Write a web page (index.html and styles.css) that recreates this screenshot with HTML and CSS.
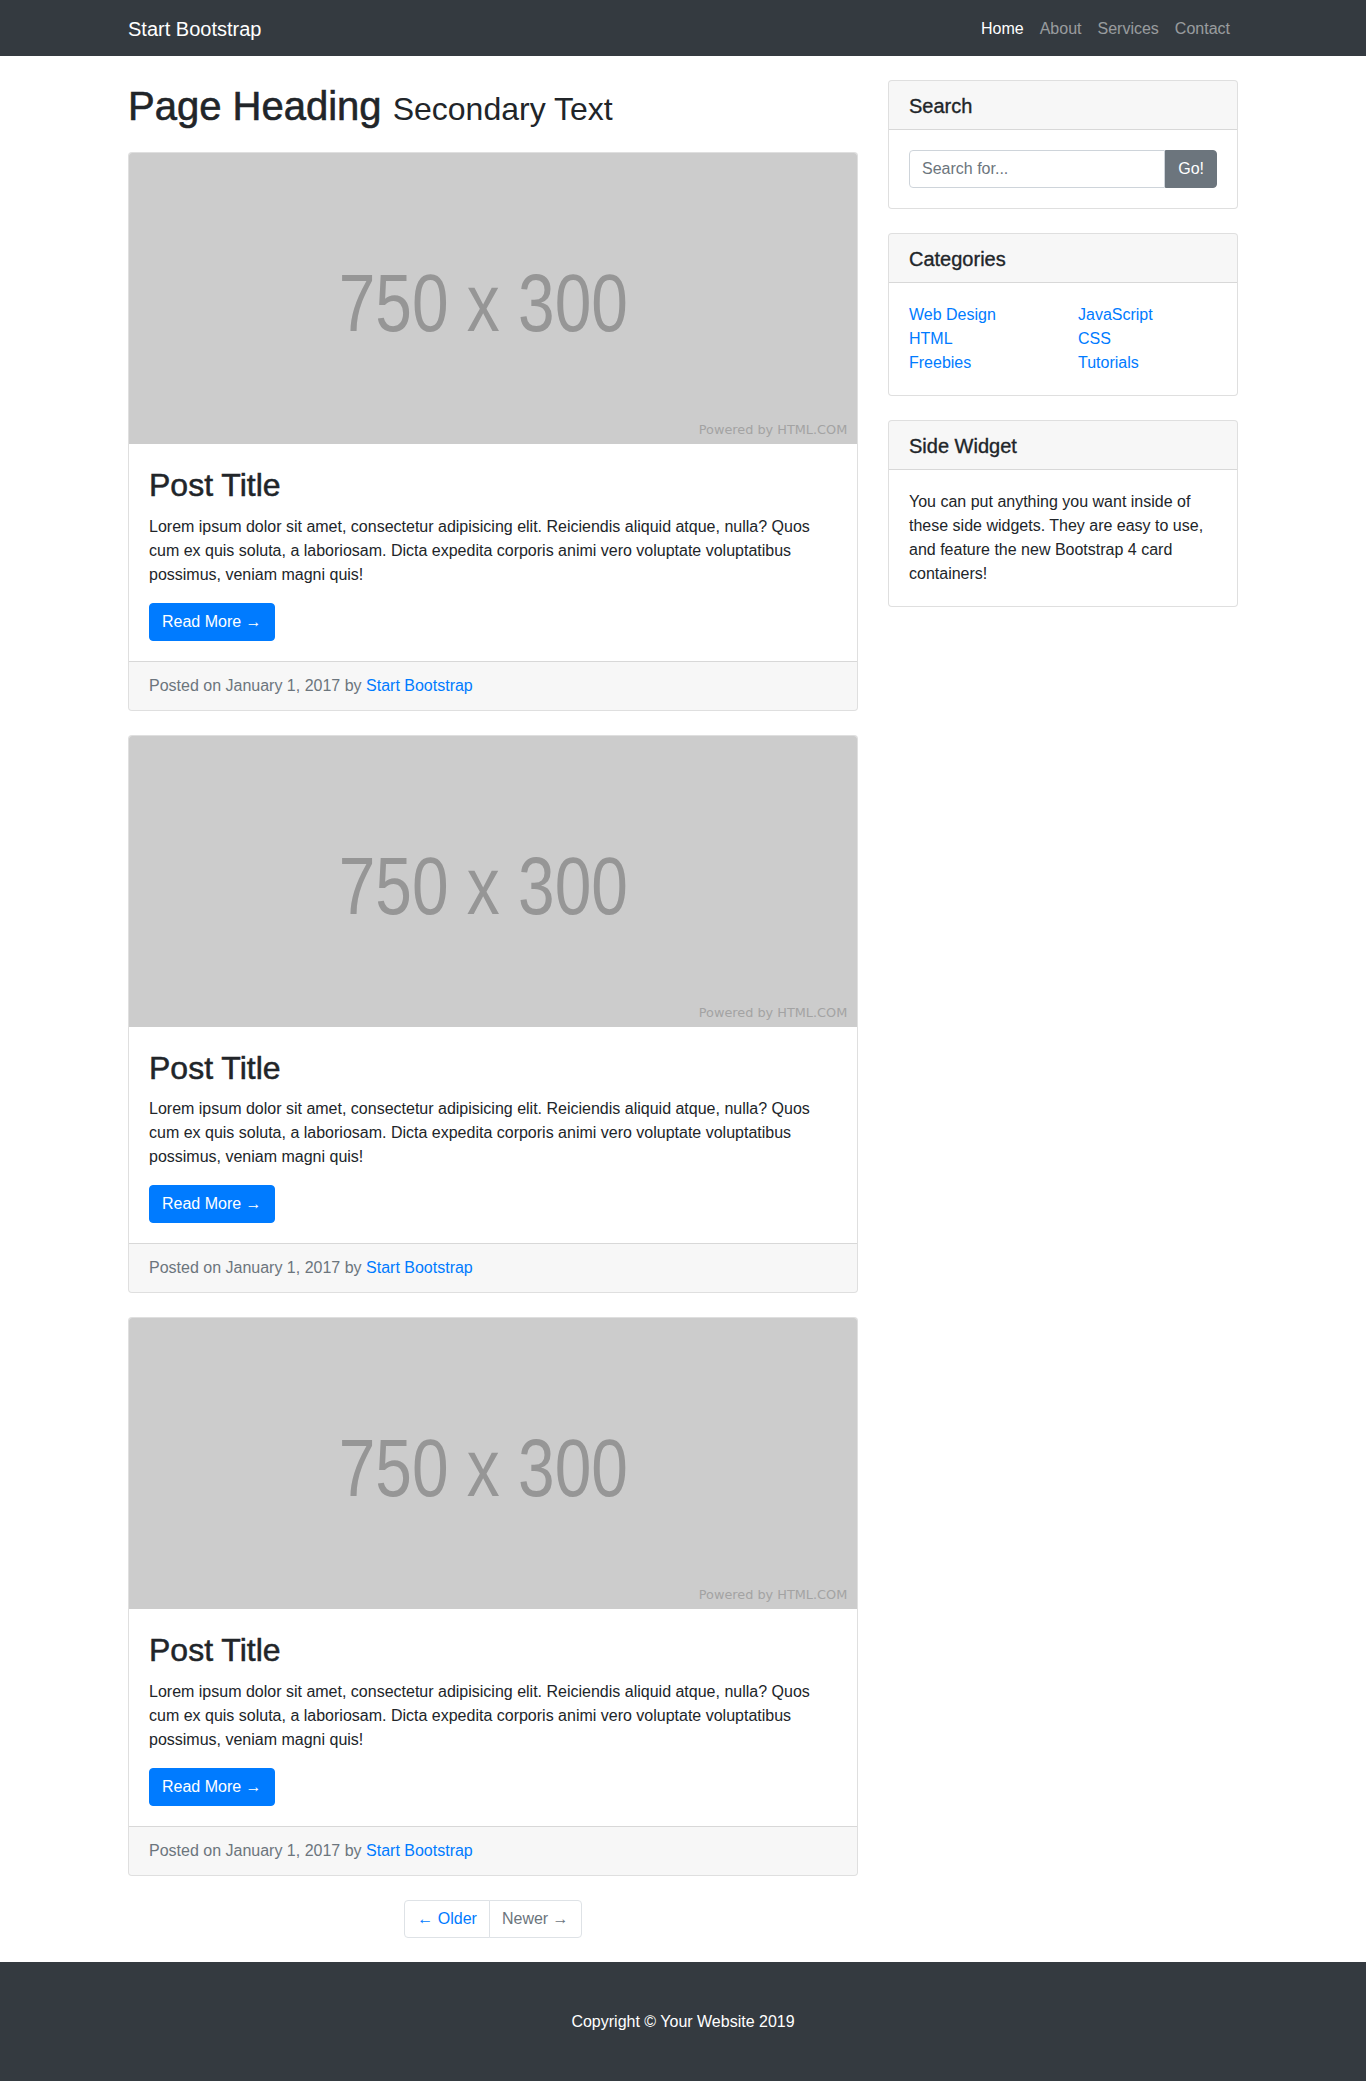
FILE: index.html
```html
<!DOCTYPE html>
<html lang="en">
<head>
<meta charset="utf-8">
<title>Blog Home - Start Bootstrap Template</title>
<link rel="stylesheet" href="styles.css">
</head>
<body>
<nav class="navbar">
  <div class="container nav-inner">
    <a class="brand" href="#">Start Bootstrap</a>
    <ul class="nav-links">
      <li><a class="nav-link active" href="#">Home</a></li>
      <li><a class="nav-link" href="#">About</a></li>
      <li><a class="nav-link" href="#">Services</a></li>
      <li><a class="nav-link" href="#">Contact</a></li>
    </ul>
  </div>
</nav>

<div class="container">
  <div class="row">
    <div class="col-main">
      <h1 class="page-heading"><span class="heading-main">Page Heading</span> <small>Secondary Text</small></h1>

      <div class="card post">
        <svg class="card-img" viewBox="0 0 750 300" xmlns="http://www.w3.org/2000/svg">
          <rect width="750" height="300" fill="#cccccc"/>
          <text x="365" y="183" text-anchor="middle" font-family="Liberation Sans, Arial, sans-serif" font-size="84" fill="#969696" textLength="298" lengthAdjust="spacingAndGlyphs">750 x 300</text>
          <text x="740" y="289.5" text-anchor="end" font-family="DejaVu Sans, sans-serif" font-size="12.5" fill="#a3a3a3" textLength="153" lengthAdjust="spacingAndGlyphs">Powered by HTML.COM</text>
        </svg>
        <div class="card-body">
          <h2 class="card-title">Post Title</h2>
          <p class="card-text">Lorem ipsum dolor sit amet, consectetur adipisicing elit. Reiciendis aliquid atque, nulla? Quos cum ex quis soluta, a laboriosam. Dicta expedita corporis animi vero voluptate voluptatibus possimus, veniam magni quis!</p>
          <a href="#" class="btn btn-primary">Read More &rarr;</a>
        </div>
        <div class="card-footer">Posted on January 1, 2017 by <a href="#">Start Bootstrap</a></div>
      </div>

      <div class="card post">
        <svg class="card-img" viewBox="0 0 750 300" xmlns="http://www.w3.org/2000/svg">
          <rect width="750" height="300" fill="#cccccc"/>
          <text x="365" y="183" text-anchor="middle" font-family="Liberation Sans, Arial, sans-serif" font-size="84" fill="#969696" textLength="298" lengthAdjust="spacingAndGlyphs">750 x 300</text>
          <text x="740" y="289.5" text-anchor="end" font-family="DejaVu Sans, sans-serif" font-size="12.5" fill="#a3a3a3" textLength="153" lengthAdjust="spacingAndGlyphs">Powered by HTML.COM</text>
        </svg>
        <div class="card-body">
          <h2 class="card-title">Post Title</h2>
          <p class="card-text">Lorem ipsum dolor sit amet, consectetur adipisicing elit. Reiciendis aliquid atque, nulla? Quos cum ex quis soluta, a laboriosam. Dicta expedita corporis animi vero voluptate voluptatibus possimus, veniam magni quis!</p>
          <a href="#" class="btn btn-primary">Read More &rarr;</a>
        </div>
        <div class="card-footer">Posted on January 1, 2017 by <a href="#">Start Bootstrap</a></div>
      </div>

      <div class="card post">
        <svg class="card-img" viewBox="0 0 750 300" xmlns="http://www.w3.org/2000/svg">
          <rect width="750" height="300" fill="#cccccc"/>
          <text x="365" y="183" text-anchor="middle" font-family="Liberation Sans, Arial, sans-serif" font-size="84" fill="#969696" textLength="298" lengthAdjust="spacingAndGlyphs">750 x 300</text>
          <text x="740" y="289.5" text-anchor="end" font-family="DejaVu Sans, sans-serif" font-size="12.5" fill="#a3a3a3" textLength="153" lengthAdjust="spacingAndGlyphs">Powered by HTML.COM</text>
        </svg>
        <div class="card-body">
          <h2 class="card-title">Post Title</h2>
          <p class="card-text">Lorem ipsum dolor sit amet, consectetur adipisicing elit. Reiciendis aliquid atque, nulla? Quos cum ex quis soluta, a laboriosam. Dicta expedita corporis animi vero voluptate voluptatibus possimus, veniam magni quis!</p>
          <a href="#" class="btn btn-primary">Read More &rarr;</a>
        </div>
        <div class="card-footer">Posted on January 1, 2017 by <a href="#">Start Bootstrap</a></div>
      </div>

      <ul class="pagination">
        <li class="page-item"><a class="page-link" href="#">&larr; Older</a></li>
        <li class="page-item disabled"><a class="page-link" href="#">Newer &rarr;</a></li>
      </ul>
    </div>

    <div class="col-side">
      <div class="card widget">
        <h5 class="card-header">Search</h5>
        <div class="card-body">
          <div class="input-group">
            <input type="text" class="form-control" placeholder="Search for...">
            <button class="btn btn-secondary" type="button">Go!</button>
          </div>
        </div>
      </div>

      <div class="card widget">
        <h5 class="card-header">Categories</h5>
        <div class="card-body">
          <div class="cat-row">
            <ul class="list-unstyled">
              <li><a href="#">Web Design</a></li>
              <li><a href="#">HTML</a></li>
              <li><a href="#">Freebies</a></li>
            </ul>
            <ul class="list-unstyled">
              <li><a href="#">JavaScript</a></li>
              <li><a href="#">CSS</a></li>
              <li><a href="#">Tutorials</a></li>
            </ul>
          </div>
        </div>
      </div>

      <div class="card widget">
        <h5 class="card-header">Side Widget</h5>
        <div class="card-body">You can put anything you want inside of these side widgets. They are easy to use, and feature the new Bootstrap 4 card containers!</div>
      </div>
    </div>
  </div>
</div>

<footer class="footer">
  <div class="container">
    <p class="copyright">Copyright &copy; Your Website 2019</p>
  </div>
</footer>
</body>
</html>
```

FILE: styles.css
```css
* { box-sizing: border-box; }

html, body { margin: 0; padding: 0; }

body {
  font-family: "Liberation Sans", Arial, sans-serif;
  font-size: 16px;
  line-height: 1.5;
  color: #212529;
  background: #fff;
}

a { color: #007bff; text-decoration: none; }

.container {
  width: 1140px;
  margin: 0 auto;
  padding: 0 15px;
}

/* Navbar */
.navbar {
  background: #343a40;
  padding: 8px 0;
  height: 56px;
}
.nav-inner {
  display: flex;
  align-items: center;
  justify-content: space-between;
  height: 40px;
}
.brand {
  color: #fff;
  font-size: 20px;
  line-height: 30px;
  padding: 6px 0 4px;
}
.nav-links {
  list-style: none;
  margin: 0;
  padding: 0;
  display: flex;
}
.nav-link {
  display: block;
  padding: 9px 8px 7px;
  color: rgba(255, 255, 255, 0.5);
}
.nav-link.active { color: #fff; }

/* Grid */
.row {
  display: flex;
  margin: 0 -15px;
}
.col-main {
  width: 760px;
  padding: 0 15px;
}
.col-side {
  width: 380px;
  padding: 0 15px;
}

.page-heading {
  font-size: 40px;
  font-weight: 400;
  line-height: 1.2;
  margin: 24px 0;
  padding-top: 2px;
  height: 48px;
}
.heading-main {
  -webkit-text-stroke: 0.6px #212529;
}
.page-heading small {
  font-size: 80%;
  font-weight: 400;
}

/* Cards */
.card {
  border: 1px solid rgba(0, 0, 0, 0.125);
  border-radius: 4px;
  background: #fff;
  overflow: hidden;
}
.post { margin-bottom: 24px; }
.card-img {
  display: block;
  width: 100%;
  height: auto;
}
.card-body { padding: 20px; }
.card-title {
  font-size: 32px;
  font-weight: 400;
  line-height: 1.2;
  margin: 0 0 12px;
  padding-top: 2px;
  height: 38.4px;
  -webkit-text-stroke: 0.5px #212529;
}
.card-text { margin: 0 0 16px; }

.btn {
  display: inline-block;
  font-size: 16px;
  line-height: 24px;
  padding: 6px 12px;
  border: 1px solid transparent;
  border-radius: 4px;
  color: #fff;
  font-family: inherit;
}
.btn-primary { background: #007bff; border-color: #007bff; }
.btn-secondary { background: #6c757d; border-color: #6c757d; }

.card-footer {
  padding: 12px 20px;
  background: rgba(0, 0, 0, 0.03);
  border-top: 1px solid rgba(0, 0, 0, 0.125);
  color: #6c757d;
}

/* Pagination */
.pagination {
  list-style: none;
  display: flex;
  justify-content: center;
  margin: 0 0 24px;
  padding: 0;
}
.page-link {
  display: block;
  padding: 8px 12px;
  line-height: 20px;
  color: #007bff;
  background: #fff;
  border: 1px solid #dee2e6;
}
.page-item:first-child .page-link { border-radius: 4px 0 0 4px; }
.page-item:last-child .page-link { border-radius: 0 4px 4px 0; margin-left: -1px; }
.page-item.disabled .page-link { color: #6c757d; }

/* Sidebar widgets */
.widget { margin: 24px 0; }
.card-header {
  margin: 0;
  padding: 13px 20px 11px;
  font-size: 20px;
  font-weight: 400;
  line-height: 24px;
  background: rgba(0, 0, 0, 0.03);
  border-bottom: 1px solid rgba(0, 0, 0, 0.125);
  -webkit-text-stroke: 0.35px #212529;
}
.input-group { display: flex; }
.form-control {
  flex: 1;
  min-width: 0;
  font-family: inherit;
  font-size: 16px;
  line-height: 24px;
  padding: 6px 12px;
  height: 38px;
  border: 1px solid #ced4da;
  border-radius: 4px 0 0 4px;
  color: #495057;
}
.form-control::placeholder { color: #6c757d; }
.input-group .btn { border-radius: 0 4px 4px 0; }

.cat-row {
  display: flex;
  margin: 0 -15px;
}
.list-unstyled {
  list-style: none;
  margin: 0;
  padding: 0 15px;
  width: 50%;
}

/* Footer */
.footer {
  background: #343a40;
  padding: 48px 0;
}
.copyright {
  margin: 0;
  color: #fff;
  text-align: center;
}
```
